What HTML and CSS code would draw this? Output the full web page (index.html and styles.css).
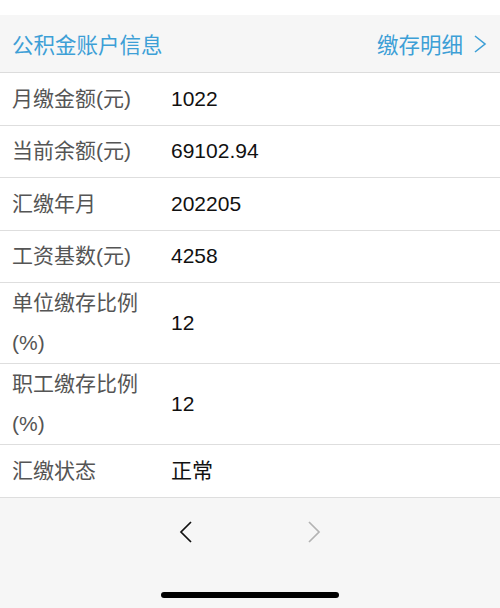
FILE: index.html
```html
<!DOCTYPE html>
<html lang="zh-CN">
<head>
<meta charset="utf-8">
<title>公积金账户信息</title>
<link rel="stylesheet" href="styles.css">
</head>
<body>
<div class="page">
  <div class="header">
    <div class="title">公积金账户信息</div>
    <div class="link">缴存明细
      <svg class="link-chev" width="14" height="20" viewBox="0 0 14 20"><polyline points="2,2 12,10 2,18" fill="none" stroke="#3d9fd6" stroke-width="1.6"/></svg>
    </div>
  </div>
  <div class="list">
    <div class="row"><div class="label">月缴金额(元)</div><div class="value">1022</div></div>
    <div class="row"><div class="label">当前余额(元)</div><div class="value">69102.94</div></div>
    <div class="row"><div class="label">汇缴年月</div><div class="value">202205</div></div>
    <div class="row"><div class="label">工资基数(元)</div><div class="value">4258</div></div>
    <div class="row"><div class="label">单位缴存比例(%)</div><div class="value">12</div></div>
    <div class="row"><div class="label">职工缴存比例(%)</div><div class="value">12</div></div>
    <div class="row"><div class="label">汇缴状态</div><div class="value">正常</div></div>
  </div>
  <div class="toolbar">
    <div class="nav">
      <svg width="14" height="24" viewBox="0 0 14 24"><polyline points="12,2 2,12 12,22" fill="none" stroke="#111" stroke-width="1.7"/></svg>
      <svg width="14" height="24" viewBox="0 0 14 24"><polyline points="2,2 12,12 2,22" fill="none" stroke="#b3b3b3" stroke-width="1.7"/></svg>
    </div>
    <div class="home"></div>
  </div>
</div>
</body>
</html>
```
FILE: styles.css
```css
html, body {
  margin: 0;
  padding: 0;
  background: #ffffff;
}
.page {
  width: 500px;
  height: 608px;
  display: flex;
  flex-direction: column;
  font-family: "Liberation Sans", "Noto Sans CJK SC", sans-serif;
  padding-top: 15px;
  box-sizing: border-box;
  overflow: hidden;
}
.header {
  height: 57px;
  background: #f6f6f6;
  border-bottom: 1px solid #dcdcdc;
  display: flex;
  align-items: center;
  justify-content: space-between;
  padding: 0 13px 0 12px;
  color: #3d9fd6;
  font-size: 21.5px;
  flex-shrink: 0;
}
.link {
  display: flex;
  align-items: center;
  gap: 10px;
}
.link-chev {
  display: block;
}
.list {
  display: flex;
  flex-direction: column;
}
.row {
  display: flex;
  align-items: center;
  min-height: 51.5px;
  border-bottom: 1px solid #dedede;
  padding-left: 12px;
  font-size: 21px;
  line-height: 40px;
}
.label {
  width: 140px;
  color: #555555;
  flex-shrink: 0;
}
.value {
  margin-left: 19px;
  color: #111111;
}
.toolbar {
  flex: 1;
  background: #f6f6f6;
  display: flex;
  flex-direction: column;
  align-items: center;
}
.nav {
  display: flex;
  gap: 114px;
  margin-top: 22px;
}
.nav svg {
  display: block;
}
.home {
  margin-top: 48px;
  width: 178px;
  height: 6px;
  border-radius: 3px;
  background: #000;
}
```
